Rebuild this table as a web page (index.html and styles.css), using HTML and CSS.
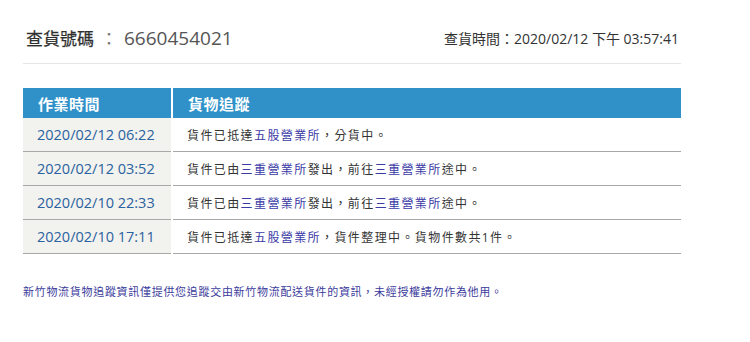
FILE: index.html
```html
<!DOCTYPE html>
<html lang="zh-Hant">
<head>
<meta charset="utf-8">
<title>查貨</title>
<link rel="stylesheet" href="styles.css">
</head>
<body>
<div class="page">
  <div class="top">
    <h1 class="title"><span class="title-label">查貨號碼</span><span class="title-sep">：</span><span class="title-num">6660454021</span></h1>
    <div class="query-time">查貨時間：2020/02/12 下午 03:57:41</div>
  </div>
  <table class="track">
    <thead>
      <tr><th class="col-time">作業時間</th><th>貨物追蹤</th></tr>
    </thead>
    <tbody>
      <tr><td class="time">2020/02/12 06:22</td><td class="desc">貨件已抵達<span class="link">五股營業所</span>，分貨中。</td></tr>
      <tr><td class="time">2020/02/12 03:52</td><td class="desc">貨件已由<span class="link">三重營業所</span>發出，前往<span class="link">三重營業所</span>途中。</td></tr>
      <tr><td class="time">2020/02/10 22:33</td><td class="desc">貨件已由<span class="link">三重營業所</span>發出，前往<span class="link">三重營業所</span>途中。</td></tr>
      <tr><td class="time">2020/02/10 17:11</td><td class="desc">貨件已抵達<span class="link">五股營業所</span>，貨件整理中。貨物件數共1件。</td></tr>
    </tbody>
  </table>
  <p class="note">新竹物流貨物追蹤資訊僅提供您追蹤交由新竹物流配送貨件的資訊，未經授權請勿作為他用。</p>
</div>
</body>
</html>
```

FILE: styles.css
```css
html, body {
  margin: 0;
  padding: 0;
  background: #ffffff;
}
body {
  font-family: "Open Sans", "Noto Sans CJK TC", sans-serif;
  color: #333333;
}
.page {
  width: 658px;
  margin-left: 23px;
}
.top {
  display: flex;
  justify-content: space-between;
  align-items: center;
  padding-top: 25px;
  padding-bottom: 11px;
  border-bottom: 1px solid #e6e6e6;
}
.title {
  margin: 0;
  font-size: 19px;
  line-height: 26px;
  font-weight: normal;
  display: flex;
  align-items: baseline;
  padding-left: 3px;
}
.title-label {
  color: #2e2e2e;
  font-size: 17px;
  -webkit-text-stroke: 0.25px #2e2e2e;
}
.title-sep {
  display: inline-block;
  width: 30px;
  text-align: center;
  color: #777777;
  font-size: 17px;
}
.title-num {
  color: #555555;
  font-size: 19px;
}
.query-time {
  font-size: 14px;
  line-height: 20px;
  color: #333333;
  padding-right: 2px;
}
.track {
  margin-top: 24px;
  width: 100%;
  border-collapse: collapse;
}
.track th {
  background: #2f91c8;
  color: #ffffff;
  font-size: 15px;
  font-weight: bold;
  text-align: left;
  height: 30px;
  padding: 0 0 0 15px;
  letter-spacing: 0.5px;
}
.track th.col-time {
  width: 133px;
  border-right: 2px solid #ffffff;
}
.track td {
  height: 33px;
  padding: 0 0 0 14px;
  border-bottom: 1px solid #a8a8a8;
}
.track td.time {
  background: #f2f2ee;
  color: #2b62a0;
  font-size: 14.5px;
  border-right: 2px solid #ffffff;
}
.track td.desc {
  font-size: 12px;
  letter-spacing: 1.4px;
  color: #333333;
}
.link {
  color: #3a3aa6;
}
.note {
  margin: 30px 0 0 0;
  font-size: 11px;
  line-height: 16px;
  letter-spacing: 0.7px;
  color: #3b3b9c;
}
```
